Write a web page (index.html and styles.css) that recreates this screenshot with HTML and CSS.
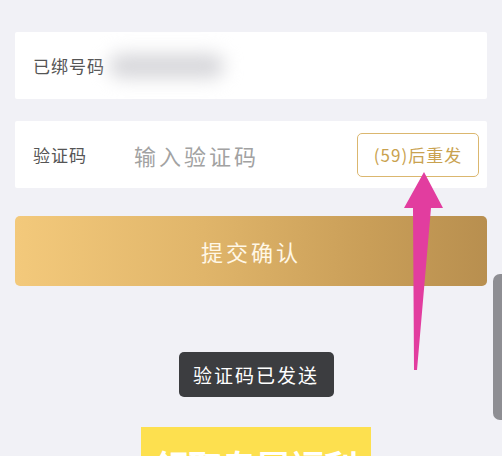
FILE: index.html
```html
<!DOCTYPE html>
<html lang="zh-CN">
<head>
    <meta charset="UTF-8">
    <title>绑定手机</title>
    <link rel="stylesheet" href="styles.css">
</head>
<body>

<div class="page">
    <div class="card">
        <span class="label">已绑号码</span>
        <div class="phone_mask"></div>
    </div>

    <div class="card card_code">
        <span class="label">验证码</span>
        <span class="placeholder">输入验证码</span>
        <span class="resend">(59)后重发</span>
    </div>

    <div class="submit">提交确认</div>

    <div class="bottom">
        <div class="toast">验证码已发送</div>
        <div class="promo">领取专属福利</div>
    </div>
</div>

<!--标注箭头-->
<svg class="arrow" width="502" height="456" viewBox="0 0 502 456">
    <polygon points="424,172 443,208 431,208 417,370 414,370 413,208 404,208" fill="#e23d9f"/>
</svg>

<div class="scrollbar"></div>

</body>
</html>
```

FILE: styles.css
```css
*{
    margin: 0;
    padding: 0;
}
html,body{
    width: 502px;
    height: 456px;
    overflow: hidden;
}
body{
    background-color: #f1f1f6;
    font-family: "Noto Sans CJK SC", "Noto Sans", sans-serif;
    position: relative;
}
.page{
    padding: 32px 15px 0;
}
.card{
    height: 67px;
    background-color: #fff;
    border-radius: 2px;
    display: flex;
    align-items: center;
    padding-left: 18px;
    margin-bottom: 22px;
}
.label{
    font-size: 17px;
    color: #555;
    letter-spacing: 1px;
}
.phone_mask{
    width: 115px;
    height: 24px;
    margin-left: 4px;
    background-color: #d6d6da;
    border-radius: 12px;
    filter: blur(9px);
}
.card_code{
    padding-right: 8px;
}
.placeholder{
    font-size: 22px;
    color: #a2a2a2;
    margin-left: 47px;
    letter-spacing: 3px;
    flex: 1;
}
.resend{
    width: 120px;
    height: 42px;
    border: 1.5px solid #dbb76f;
    border-radius: 5px;
    color: #c9a24f;
    font-size: 17px;
    display: flex;
    align-items: center;
    justify-content: center;
    letter-spacing: 1px;
}
.submit{
    height: 70px;
    margin-top: 28px;
    border-radius: 5px;
    background: linear-gradient(to right, #f3c97b, #e0b56a 40%, #c99e58 75%, #b88f4f);
    color: #fff7e6;
    font-size: 22px;
    letter-spacing: 3px;
    display: flex;
    align-items: center;
    justify-content: center;
}
.bottom{
    display: flex;
    flex-direction: column;
    align-items: center;
    padding-left: 10px;
    margin-top: 66px;
}
.toast{
    width: 155px;
    height: 45px;
    background-color: #3c3d40;
    border-radius: 5px;
    color: #fff;
    font-size: 19px;
    letter-spacing: 2px;
    display: flex;
    align-items: center;
    justify-content: center;
}
.promo{
    width: 230px;
    height: 60px;
    margin-top: 30px;
    background-color: #fde04f;
    color: #fff;
    font-size: 34px;
    font-weight: bold;
    text-align: center;
    padding-top: 14px;
    white-space: nowrap;
    overflow: hidden;
}
.arrow{
    position: absolute;
    left: 0;
    top: 0;
}
.scrollbar{
    position: absolute;
    left: 493px;
    top: 274px;
    width: 20px;
    height: 146px;
    background-color: #8e8e93;
    border-radius: 7px;
}
```
